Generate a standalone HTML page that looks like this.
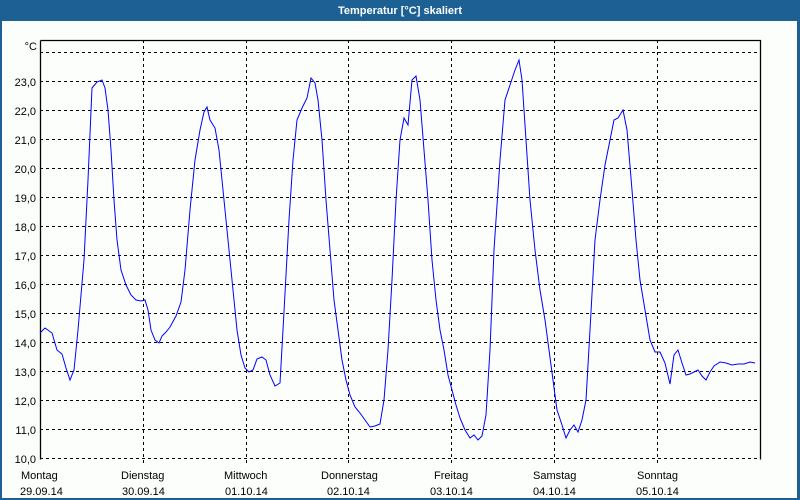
<!DOCTYPE html>
<html><head><meta charset="utf-8"><style>
html,body{margin:0;padding:0;background:#fcfefc;}
body{width:800px;height:500px;overflow:hidden;position:relative;font-family:"Liberation Sans",sans-serif;}
</style></head><body>
<svg width="800" height="500" xmlns="http://www.w3.org/2000/svg" style="position:absolute;left:0;top:0">
<rect x="0" y="0" width="800" height="500" fill="#1c6094"/>
<rect x="2" y="21" width="795" height="477" fill="#fcfefc"/>
<text x="400" y="14" fill="#fff" font-size="11" font-weight="bold" text-anchor="middle" font-family="Liberation Sans, sans-serif">Temperatur [°C] skaliert</text>
<g stroke="#000" stroke-width="1" stroke-dasharray="3,3" fill="none">
<line x1="40" y1="52.5" x2="760" y2="52.5"/>
<line x1="40" y1="81.5" x2="760" y2="81.5"/>
<line x1="40" y1="110.5" x2="760" y2="110.5"/>
<line x1="40" y1="139.5" x2="760" y2="139.5"/>
<line x1="40" y1="168.5" x2="760" y2="168.5"/>
<line x1="40" y1="197.5" x2="760" y2="197.5"/>
<line x1="40" y1="226.5" x2="760" y2="226.5"/>
<line x1="40" y1="255.5" x2="760" y2="255.5"/>
<line x1="40" y1="284.5" x2="760" y2="284.5"/>
<line x1="40" y1="313.5" x2="760" y2="313.5"/>
<line x1="40" y1="342.5" x2="760" y2="342.5"/>
<line x1="40" y1="371.5" x2="760" y2="371.5"/>
<line x1="40" y1="400.5" x2="760" y2="400.5"/>
<line x1="40" y1="429.5" x2="760" y2="429.5"/>
<line x1="40" y1="458.5" x2="760" y2="458.5"/>
<line x1="143.5" y1="40" x2="143.5" y2="466"/>
<line x1="246.5" y1="40" x2="246.5" y2="466"/>
<line x1="348.5" y1="40" x2="348.5" y2="466"/>
<line x1="451.5" y1="40" x2="451.5" y2="466"/>
<line x1="554.5" y1="40" x2="554.5" y2="466"/>
<line x1="657.5" y1="40" x2="657.5" y2="466"/>
</g>
<path d="M40.5 40.5 H760.5 V459.5 M40.5 40.5 V459.5" stroke="#000" stroke-width="1.3" fill="none"/>
<polyline fill="none" stroke="#0000ff" stroke-width="1" points="40,333 45,328 52,333 57,350 62,354 66,368 70,380 74,370 78,330 84,260 88,180 92,88 97,82 102,80 105,88 108,110 111,150 114,200 117,240 121,270 126,285 131,295 136,300 141,301 145,300 148,310 151,330 155,340 159,343 162,336 166,332 170,327 176,316 181,302 185,270 190,210 195,160 200,130 204,112 207,107 210,120 215,128 219,150 223,190 228,240 233,290 237,330 241,355 245,368 249,372 253,370 257,359 262,357 266,360 270,375 275,386 280,383 283,330 289,220 293,160 297,120 302,108 307,98 311,78 315,83 318,100 322,140 326,200 330,250 334,300 338,330 342,360 346,380 350,395 355,407 360,413 365,420 370,427 375,426 380,424 384,400 388,350 392,280 396,200 400,140 404,118 408,125 412,80 416,76 420,100 424,150 428,200 432,260 436,300 440,330 444,350 448,375 452,390 456,405 460,418 465,430 470,438 474,435 478,440 482,436 486,415 490,350 494,250 500,160 505,100 510,85 515,70 519,60 522,80 526,140 530,200 535,250 540,290 545,320 549,350 553,380 557,410 562,425 566,438 570,430 574,425 578,432 582,420 586,400 590,330 595,240 600,200 605,165 610,140 614,120 618,118 623,110 627,130 632,190 636,240 640,280 645,310 650,340 655,352 660,352 665,363 670,384 674,355 678,350 682,363 686,375 690,374 694,372 698,370 702,376 706,380 710,372 714,366 720,362 726,363 732,365 738,364 744,364 750,362 755,363"/>
<g font-size="11" fill="#000" font-family="Liberation Sans, sans-serif" text-anchor="end">
<text x="37" y="50">°C</text>
<text x="36" y="86">23,0</text>
<text x="36" y="115">22,0</text>
<text x="36" y="144">21,0</text>
<text x="36" y="173">20,0</text>
<text x="36" y="202">19,0</text>
<text x="36" y="231">18,0</text>
<text x="36" y="260">17,0</text>
<text x="36" y="289">16,0</text>
<text x="36" y="318">15,0</text>
<text x="36" y="347">14,0</text>
<text x="36" y="376">13,0</text>
<text x="36" y="405">12,0</text>
<text x="36" y="434">11,0</text>
<text x="36" y="463">10,0</text>
</g>
<g font-size="11" fill="#000" font-family="Liberation Sans, sans-serif">
<text x="21" y="479">Montag</text><text x="20" y="495">29.09.14</text>
<text x="121" y="479">Dienstag</text><text x="122" y="495">30.09.14</text>
<text x="224" y="479">Mittwoch</text><text x="225" y="495">01.10.14</text>
<text x="321" y="479">Donnerstag</text><text x="327" y="495">02.10.14</text>
<text x="434" y="479">Freitag</text><text x="430" y="495">03.10.14</text>
<text x="533" y="479">Samstag</text><text x="533" y="495">04.10.14</text>
<text x="637" y="479">Sonntag</text><text x="636" y="495">05.10.14</text>
</g>
</svg>
</body></html>
